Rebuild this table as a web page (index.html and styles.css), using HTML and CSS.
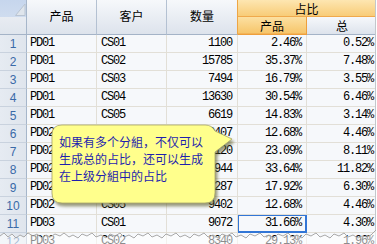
FILE: index.html
```html
<!DOCTYPE html>
<html>
<head>
<meta charset="utf-8">
<link rel="stylesheet" href="styles.css">
</head>
<body>
<div class="sheet">
  <div class="grid">
    <div class="hdr corner"><svg width="26" height="34" viewBox="0 0 26 34"><polygon points="15.5,15.5 25,15.5 25,4" fill="#dfe5ec" stroke="#b9c4d2" stroke-width="1"/></svg></div>
    <div class="hdr h-prod">产品</div>
    <div class="hdr h-cust">客户</div>
    <div class="hdr h-qty">数量</div>
    <div class="hdr grp">占比</div>
    <div class="hdr sub hot">产品</div>
    <div class="hdr sub h-tot">总</div>

    <div class="rn">1</div><div class="cell">PD01</div><div class="cell">CS01</div><div class="cell num">1100</div><div class="cell num">2.46%</div><div class="cell num tot">0.52%</div>
    <div class="rn">2</div><div class="cell">PD01</div><div class="cell">CS02</div><div class="cell num">15785</div><div class="cell num">35.37%</div><div class="cell num tot">7.48%</div>
    <div class="rn">3</div><div class="cell">PD01</div><div class="cell">CS03</div><div class="cell num">7494</div><div class="cell num">16.79%</div><div class="cell num tot">3.55%</div>
    <div class="rn">4</div><div class="cell">PD01</div><div class="cell">CS04</div><div class="cell num">13630</div><div class="cell num">30.54%</div><div class="cell num tot">6.46%</div>
    <div class="rn">5</div><div class="cell">PD01</div><div class="cell">CS05</div><div class="cell num">6619</div><div class="cell num">14.83%</div><div class="cell num tot">3.14%</div>
    <div class="rn">6</div><div class="cell">PD02</div><div class="cell">CS01</div><div class="cell num">9407</div><div class="cell num">12.68%</div><div class="cell num tot">4.46%</div>
    <div class="rn">7</div><div class="cell">PD02</div><div class="cell">CS02</div><div class="cell num">17120</div><div class="cell num">23.09%</div><div class="cell num tot">8.11%</div>
    <div class="rn">8</div><div class="cell">PD02</div><div class="cell">CS03</div><div class="cell num">24944</div><div class="cell num">33.64%</div><div class="cell num tot">11.82%</div>
    <div class="rn">9</div><div class="cell">PD02</div><div class="cell">CS04</div><div class="cell num">13287</div><div class="cell num">17.92%</div><div class="cell num tot">6.30%</div>
    <div class="rn">10</div><div class="cell">PD02</div><div class="cell">CS05</div><div class="cell num">9402</div><div class="cell num">12.68%</div><div class="cell num tot">4.46%</div>
    <div class="rn">11</div><div class="cell">PD03</div><div class="cell">CS01</div><div class="cell num">9072</div><div class="cell num selected">31.66%</div><div class="cell num tot">4.30%</div>
    <div class="rn">12</div><div class="cell">PD03</div><div class="cell">CS02</div><div class="cell num">8340</div><div class="cell num">29.13%</div><div class="cell num tot">1.96%</div>
  </div>

  <svg class="callout" width="377" height="244" viewBox="0 0 377 244">
    <path d="M62,125 H205 Q212,125 215,131 L232,139 L215,152 V193 Q215,203 205,203 H62 Q52,203 52,193 V135 Q52,125 62,125 Z" fill="#ffff8c" stroke="#a8a66a" stroke-width="0.8"/>
  </svg>
  <div class="callout-text">如果有多个分組，不仅可以<br>生成总的占比，还可以生成<br>在上级分組中的占比</div>

  <svg class="torn" width="377" height="244" viewBox="0 0 377 244">
    <path d="M0,236 L4,233 L8,237 L12,234 L16,238 L20,235 L24,237 L28,233 L33,236 L37,234 L42,238 L46,235 L50,237 L55,234 L60,236 L64,233 L69,237 L73,235 L78,238 L82,234 L87,236 L92,233 L96,237 L101,235 L106,238 L110,234 L115,236 L120,233 L124,237 L129,235 L134,238 L138,234 L143,236 L148,233 L152,237 L157,235 L162,238 L166,234 L171,236 L176,233 L180,237 L185,235 L190,238 L194,234 L199,236 L204,233 L208,237 L213,235 L218,238 L222,234 L227,236 L232,233 L236,237 L241,235 L246,238 L250,234 L255,236 L260,233 L264,237 L269,235 L274,238 L278,234 L283,236 L288,233 L292,237 L297,235 L302,238 L306,234 L311,236 L316,233 L320,237 L325,235 L330,238 L334,234 L339,236 L344,233 L348,237 L353,235 L358,238 L362,236 L367,237 L371,235 L374,232 L376,230 L377,230 L377,244 L0,244 Z" fill="#ffffff" fill-opacity="0.55"/>
    <path d="M0,236 L4,233 L8,237 L12,234 L16,238 L20,235 L24,237 L28,233 L33,236 L37,234 L42,238 L46,235 L50,237 L55,234 L60,236 L64,233 L69,237 L73,235 L78,238 L82,234 L87,236 L92,233 L96,237 L101,235 L106,238 L110,234 L115,236 L120,233 L124,237 L129,235 L134,238 L138,234 L143,236 L148,233 L152,237 L157,235 L162,238 L166,234 L171,236 L176,233 L180,237 L185,235 L190,238 L194,234 L199,236 L204,233 L208,237 L213,235 L218,238 L222,234 L227,236 L232,233 L236,237 L241,235 L246,238 L250,234 L255,236 L260,233 L264,237 L269,235 L274,238 L278,234 L283,236 L288,233 L292,237 L297,235 L302,238 L306,234 L311,236 L316,233 L320,237 L325,235 L330,238 L334,234 L339,236 L344,233 L348,237 L353,235 L358,238 L362,236 L367,237 L371,235 L374,232 L376,230" fill="none" stroke="#a9a9a9" stroke-width="1"/>
  </svg>
</div>
</body>
</html>
```

FILE: styles.css
```css
html, body {
  margin: 0;
  padding: 0;
  background: #ffffff;
}

.sheet {
  position: relative;
  width: 377px;
  height: 244px;
  overflow: hidden;
  background: #ffffff;
}

.grid {
  display: grid;
  grid-template-columns: 27px 70px 70px 71px 69px 68px;
  grid-template-rows: 17px 18px repeat(12, 18px);
  width: 375px;
  border-right: 1px solid #c3c7cc;
  background: #f6f8fb;
}

.hdr {
  box-sizing: border-box;
  display: flex;
  align-items: center;
  justify-content: center;
  font-family: "Noto Sans CJK SC", "Noto Sans", sans-serif;
  font-size: 12px;
  color: #000;
  background: linear-gradient(#f6f8fb, #dde3ec);
  border-right: 1px solid #b4c1d2;
  border-bottom: 1px solid #a4b3c7;
}

.corner {
  grid-column: 1;
  grid-row: 1 / 3;
  background: linear-gradient(#c6d6ed 0, #cfdcef 17px, #e8ecf2 17px, #dfe5ed 100%);
  border-right: 1px solid #a6b6ca;
  align-items: flex-start;
  justify-content: flex-start;
}

.corner svg {
  display: block;
}

.h-prod { grid-column: 2; grid-row: 1 / 3; padding-bottom: 3px; }
.h-cust { grid-column: 3; grid-row: 1 / 3; padding-bottom: 3px; }
.h-qty  { grid-column: 4; grid-row: 1 / 3; padding-bottom: 3px; border-right: 1px solid #eea544; }

.grp {
  grid-column: 5 / 7;
  grid-row: 1;
  background: linear-gradient(#fde6b1, #f8cc78);
  border-right: none;
  border-bottom: 1px solid #f0a94c;
}

.sub {
  grid-row: 2;
}

.hot {
  grid-column: 5;
  background: linear-gradient(#fce0a2, #f6c468);
  border-right: 1px solid #ee9f3c;
  border-bottom: 1px solid #ee9f3c;
  box-shadow: inset 0 -1px 0 #f3b458;
}

.h-tot {
  grid-column: 6;
  border-right: none;
  padding-left: 2px;
}

.rn {
  box-sizing: border-box;
  display: flex;
  align-items: center;
  justify-content: center;
  font-family: "Liberation Sans", "DejaVu Sans", sans-serif;
  font-size: 12px;
  color: #3a6aa8;
  background: linear-gradient(90deg, #e6ebf2, #dfe5ed);
  border-right: 1px solid #a6b6ca;
  border-bottom: 1px solid #c9d2de;
}

.cell {
  box-sizing: border-box;
  font-family: "Liberation Mono", "DejaVu Sans Mono", monospace;
  font-size: 12px;
  letter-spacing: -1.2px;
  line-height: 17px;
  color: #000;
  padding: 0 4px 0 4px;
  white-space: nowrap;
  overflow: hidden;
  border-right: 1px solid #e2dfd7;
  border-bottom: 1px solid #e2dfd7;
}

.cell:nth-child(6n+9) {
  padding-left: 3px;
}

.num {
  text-align: right;
  padding-right: 5px;
}

.tot {
  border-right: none;
  padding-right: 2px;
}

.selected {
  box-shadow: inset 0 0 0 1px #3276d6;
  border-right-color: #3276d6;
  border-bottom-color: #3276d6;
}

.callout {
  position: absolute;
  left: 0;
  top: 0;
  pointer-events: none;
  filter: drop-shadow(2px 3px 1.5px rgba(90, 90, 40, 0.6));
}

.callout-text {
  position: absolute;
  left: 59px;
  top: 133px;
  font-family: "Noto Sans CJK SC", "Noto Sans", sans-serif;
  font-size: 12px;
  line-height: 17px;
  color: #1f1fae;
  white-space: nowrap;
}

.torn {
  position: absolute;
  left: 0;
  top: 0;
  pointer-events: none;
}
```
